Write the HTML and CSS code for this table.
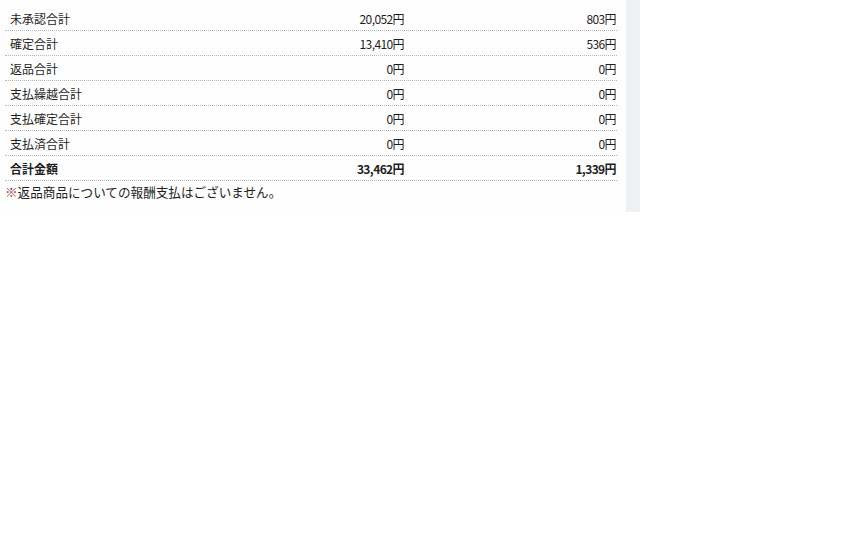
FILE: index.html
```html
<!DOCTYPE html>
<html lang="ja">
<head>
<meta charset="utf-8">
<link rel="stylesheet" href="styles.css">
</head>
<body>
<div class="page">
  <div class="main">
    <div class="summary">
      <div class="row"><div class="label">未承認合計</div><div class="amt">20,052円</div><div class="amt last">803円</div></div>
      <div class="row"><div class="label">確定合計</div><div class="amt">13,410円</div><div class="amt last">536円</div></div>
      <div class="row"><div class="label">返品合計</div><div class="amt">0円</div><div class="amt last">0円</div></div>
      <div class="row"><div class="label">支払繰越合計</div><div class="amt">0円</div><div class="amt last">0円</div></div>
      <div class="row"><div class="label">支払確定合計</div><div class="amt">0円</div><div class="amt last">0円</div></div>
      <div class="row"><div class="label">支払済合計</div><div class="amt">0円</div><div class="amt last">0円</div></div>
      <div class="row total"><div class="label">合計金額</div><div class="amt">33,462円</div><div class="amt last">1,339円</div></div>
    </div>
    <p class="note"><span class="mark">※</span>返品商品についての報酬支払はございません。</p>
  </div>
  <div class="side"></div>
</div>
</body>
</html>
```

FILE: styles.css
```css
html, body {
  margin: 0;
  padding: 0;
  background: #ffffff;
}
body {
  font-family: "Noto Sans CJK JP", "Noto Sans", sans-serif;
  font-size: 12px;
  color: #1e1e1e;
}
.page {
  display: flex;
  width: 640px;
  height: 212px;
}
.main {
  width: 626px;
  background: #fefefe;
  padding: 6px 0 0 5px;
  box-sizing: border-box;
}
.summary {
  width: 612px;
}
.row {
  display: grid;
  grid-template-columns: 200px 200px 212px;
  height: 24px;
  align-items: center;
  border-bottom: 1px dotted #b8b8b8;
}
.label {
  padding-left: 5px;
}
.amt {
  text-align: right;
  padding-right: 1px;
  letter-spacing: -0.6px;
}
.total {
  font-weight: bold;
}
.note {
  margin: 0;
  height: 22px;
  line-height: 22px;
  font-size: 12.6px;
  color: #1e1e1e;
}
.mark {
  color: #8a1c1c;
}
.side {
  width: 14px;
  background: #eef0f3;
}
```
